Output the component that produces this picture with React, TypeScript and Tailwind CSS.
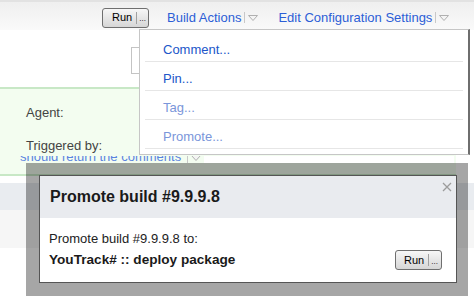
import React from 'react'

function Caret() {
  return (
    <svg width="10" height="6" viewBox="0 0 10 6" className="block">
      <path d="M0.5 0.5 H9.5 L5 5.5 Z" fill="#f4f4f4" stroke="#b0b0b0" strokeWidth="1" />
    </svg>
  )
}

function RunButton({ pad = 'pl-[9px]' }: { pad?: string }) {
  return (
    <div
      className={`flex h-[20px] w-[47px] items-center rounded-[3px] border border-[#6f6f6f] bg-gradient-to-b from-[#f7f7f7] to-[#d6d6d6] text-[11px] text-black ${pad}`}
    >
      <span className="leading-none">Run</span>
      <span className="ml-[4px] h-[12px] w-px bg-[#a0a0a0]" />
      <span className="ml-[2px] pt-[3px] text-[8px] leading-none">...</span>
    </div>
  )
}

const MENU = [
  { label: 'Comment...', color: 'text-[#2156c9]' },
  { label: 'Pin...', color: 'text-[#2156c9]' },
  { label: 'Tag...', color: 'text-[#7a96da]' },
  { label: 'Promote...', color: 'text-[#7a96da]' },
]

export default function App() {
  return (
    <div className="relative h-[305px] w-[474px] overflow-hidden bg-white font-['Liberation_Sans',Arial,sans-serif] text-[13px]">
      {/* Header bar */}
      <div className="flex h-[30px] items-center border-t-[2px] border-[#e2e2e2] bg-gradient-to-b from-[#efefef] to-[#fafafa] pl-[102px] pt-[3px]">
        <RunButton />
        <span className="ml-[18px] text-[#2c5ed6]">Build Actions</span>
        <span className="ml-[3px] h-[11px] w-px bg-[#c8c8c8]" />
        <span className="ml-[3px]"><Caret /></span>
        <span className="ml-[20px] text-[#2c5ed6]">Edit Configuration Settings</span>
        <span className="ml-[3px] h-[11px] w-px bg-[#c8c8c8]" />
        <span className="ml-[3px]"><Caret /></span>
      </div>

      {/* Page content behind the popups */}
      <div className="ml-[131px] mt-[17px] h-[27px] w-[24px] border border-[#c4c4c4]" />
      <div className="mt-[109px] h-[27px] bg-[#e9ecf0]" />
      <div className="h-[38px] bg-[#f6f6f6]" />

      {/* Agent info panel */}
      <div className="absolute left-0 top-[87px] h-[89px] w-[456px] border-y-2 border-[#c8e8c6] bg-[#f3fdf0] pl-[26px] pt-[16px] text-[#444]">
        <div className="leading-[16px]">Agent:</div>
        <div className="mt-[17px] leading-[16px]">Triggered by:</div>
        <div className="-ml-[6px] mt-[2px] flex h-[7px] items-start overflow-hidden">
          <span className="-mt-[7px] leading-[15px] text-[#5a84e0]">should return the comments</span>
          <span className="ml-[6px] h-[8px] w-px bg-[#c8c8c8]" />
          <span className="ml-[3px] -mt-[1px]"><Caret /></span>
          <div className="ml-[3px] mr-[2px] h-[8px] flex-1 bg-white" />
        </div>
      </div>

      {/* Build Actions dropdown */}
      <div className="absolute left-[139px] top-[29px] w-[331px] border border-[#c6c6c6] border-r-2 border-r-[#6e6e6e] bg-white px-[5px] pb-[5px] pt-[3px]">
        {MENU.map(m => (
          <div
            key={m.label}
            className={`flex h-[29px] items-center border-b border-[#e6e6e6] pl-[18px] pt-[5px] ${m.color}`}
          >
            {m.label}
          </div>
        ))}
      </div>

      {/* Modal dim frame + dialog */}
      <div className="absolute left-[26px] top-[163px] h-[133px] w-[442px] bg-black/35 pl-[13px] pr-[11px] pt-[12px]">
        <div className="relative h-[108px] border border-[#555] bg-white">
          <div className="flex h-[42px] items-center bg-[#e9ebef] pl-[10px] text-[16px] font-bold text-[#1a1a1a]">
            Promote build #9.9.9.8
          </div>
          <svg width="10" height="10" viewBox="0 0 10 10" className="absolute right-[4px] top-[6px]">
            <path d="M1 1 L9 9 M9 1 L1 9" stroke="#9c9c9c" strokeWidth="1.3" />
          </svg>
          <div className="pl-[9px] pr-[14px] pt-[13px] text-[#222]">
            <div className="leading-[16px]">Promote build #9.9.9.8 to:</div>
            <div className="mt-[3px] flex h-[20px] items-center justify-between">
              <span className="text-[13.6px] font-bold text-[#1a1a1a]">YouTrack# :: deploy package</span>
              <RunButton pad="pl-[8px]" />
            </div>
          </div>
        </div>
      </div>
    </div>
  )
}
